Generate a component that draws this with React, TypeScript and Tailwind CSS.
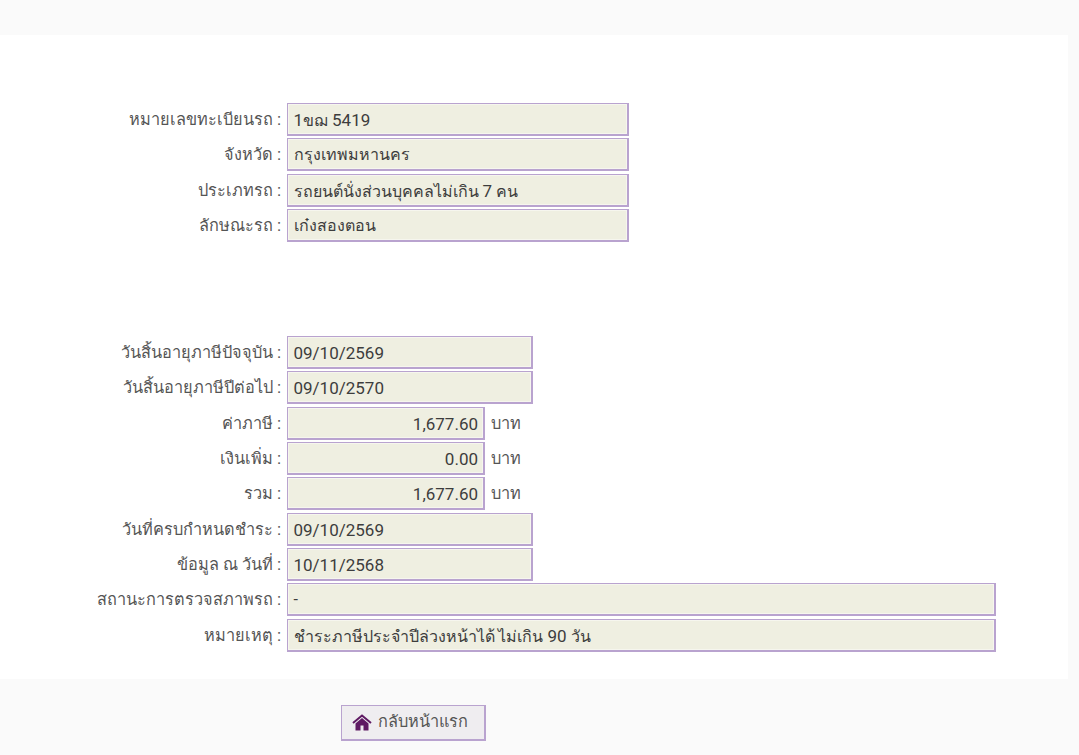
import React from "react";

// digits and latin run a bit larger than the thai text in the reference
function Mixed({ text }: { text: string }) {
  return (
    <>
      {text.split(/([0-9][0-9,./]*)/).map((part, i) =>
        i % 2 === 1 ? (
          <span key={i} className="text-[17px]">
            {part}
          </span>
        ) : (
          <span key={i}>{part}</span>
        ),
      )}
    </>
  );
}

function Field({ label, value, w, right, unit }: { label: string; value: string; w: string; right?: boolean; unit?: string }) {
  return (
    <div className="flex h-[35.3px] items-start">
      <div className="w-[281px] pt-[4px] text-right leading-[24px] text-[#555]">
        {label} <span className="text-[17px]">:</span>
      </div>
      <div className={`ml-[6px] h-[33px] border border-r-2 border-b-2 border-[#b9a3cf] bg-[#efefe1] pl-[5.5px] pr-[5px] pt-[4px] text-[16px] leading-[24px] text-[#3d3d3d] shadow-[inset_0_0_0_1px_#f6f6ee] ${w} ${right ? "text-right" : ""}`}>
        <Mixed text={value} />
      </div>
      {unit && <div className="ml-[6px] pt-[5px] leading-[24px] text-[#555]">{unit}</div>}
    </div>
  );
}

export default function App() {
  return (
    <div className="h-[755px] overflow-hidden bg-[#fafafa] pt-[35px] font-['Roboto','Noto_Sans',sans-serif] text-[16.3px]">
      <div className="h-[644px] w-[1068px] bg-white pt-[68px]">
        <Field label="หมายเลขทะเบียนรถ" value="1ขฌ 5419" w="w-[342px]" />
        <Field label="จังหวัด" value="กรุงเทพมหานคร" w="w-[342px]" />
        <Field label="ประเภทรถ" value="รถยนต์นั่งส่วนบุคคลไม่เกิน 7 คน" w="w-[342px]" />
        <Field label="ลักษณะรถ" value="เก๋งสองตอน" w="w-[342px]" />
        <div className="h-[92px]" />
        <Field label="วันสิ้นอายุภาษีปัจจุบัน" value="09/10/2569" w="w-[246px]" />
        <Field label="วันสิ้นอายุภาษีปีต่อไป" value="09/10/2570" w="w-[246px]" />
        <Field label="ค่าภาษี" value="1,677.60" w="w-[198px]" right unit="บาท" />
        <Field label="เงินเพิ่ม" value="0.00" w="w-[198px]" right unit="บาท" />
        <Field label="รวม" value="1,677.60" w="w-[198px]" right unit="บาท" />
        <Field label="วันที่ครบกำหนดชำระ" value="09/10/2569" w="w-[246px]" />
        <Field label="ข้อมูล ณ วันที่" value="10/11/2568" w="w-[246px]" />
        <Field label="สถานะการตรวจสภาพรถ" value="-" w="w-[709px]" />
        <Field label="หมายเหตุ" value="ชำระภาษีประจำปีล่วงหน้าได้ ไม่เกิน 90 วัน" w="w-[709px]" />
      </div>
      <div className="ml-[341px] mt-[26px] flex h-[36px] w-[145px] items-center border border-r-2 border-b-2 border-[#b9a3cf] bg-[#efedf0] pl-[10px] text-[#555]">
        <svg viewBox="0 0 20 17" className="h-[17px] w-[20px]">
          <path d="M1 9 10 1.5l9 7.5" fill="none" stroke="#5f1a63" strokeWidth="2" />
          <path d="M3.5 9.5 10 4l6.5 5.5V16.500h-5v-5h-3v5h-5z" fill="#5f1a63" />
        </svg>
        <span className="ml-[6px]">กลับหน้าแรก</span>
      </div>
    </div>
  );
}
